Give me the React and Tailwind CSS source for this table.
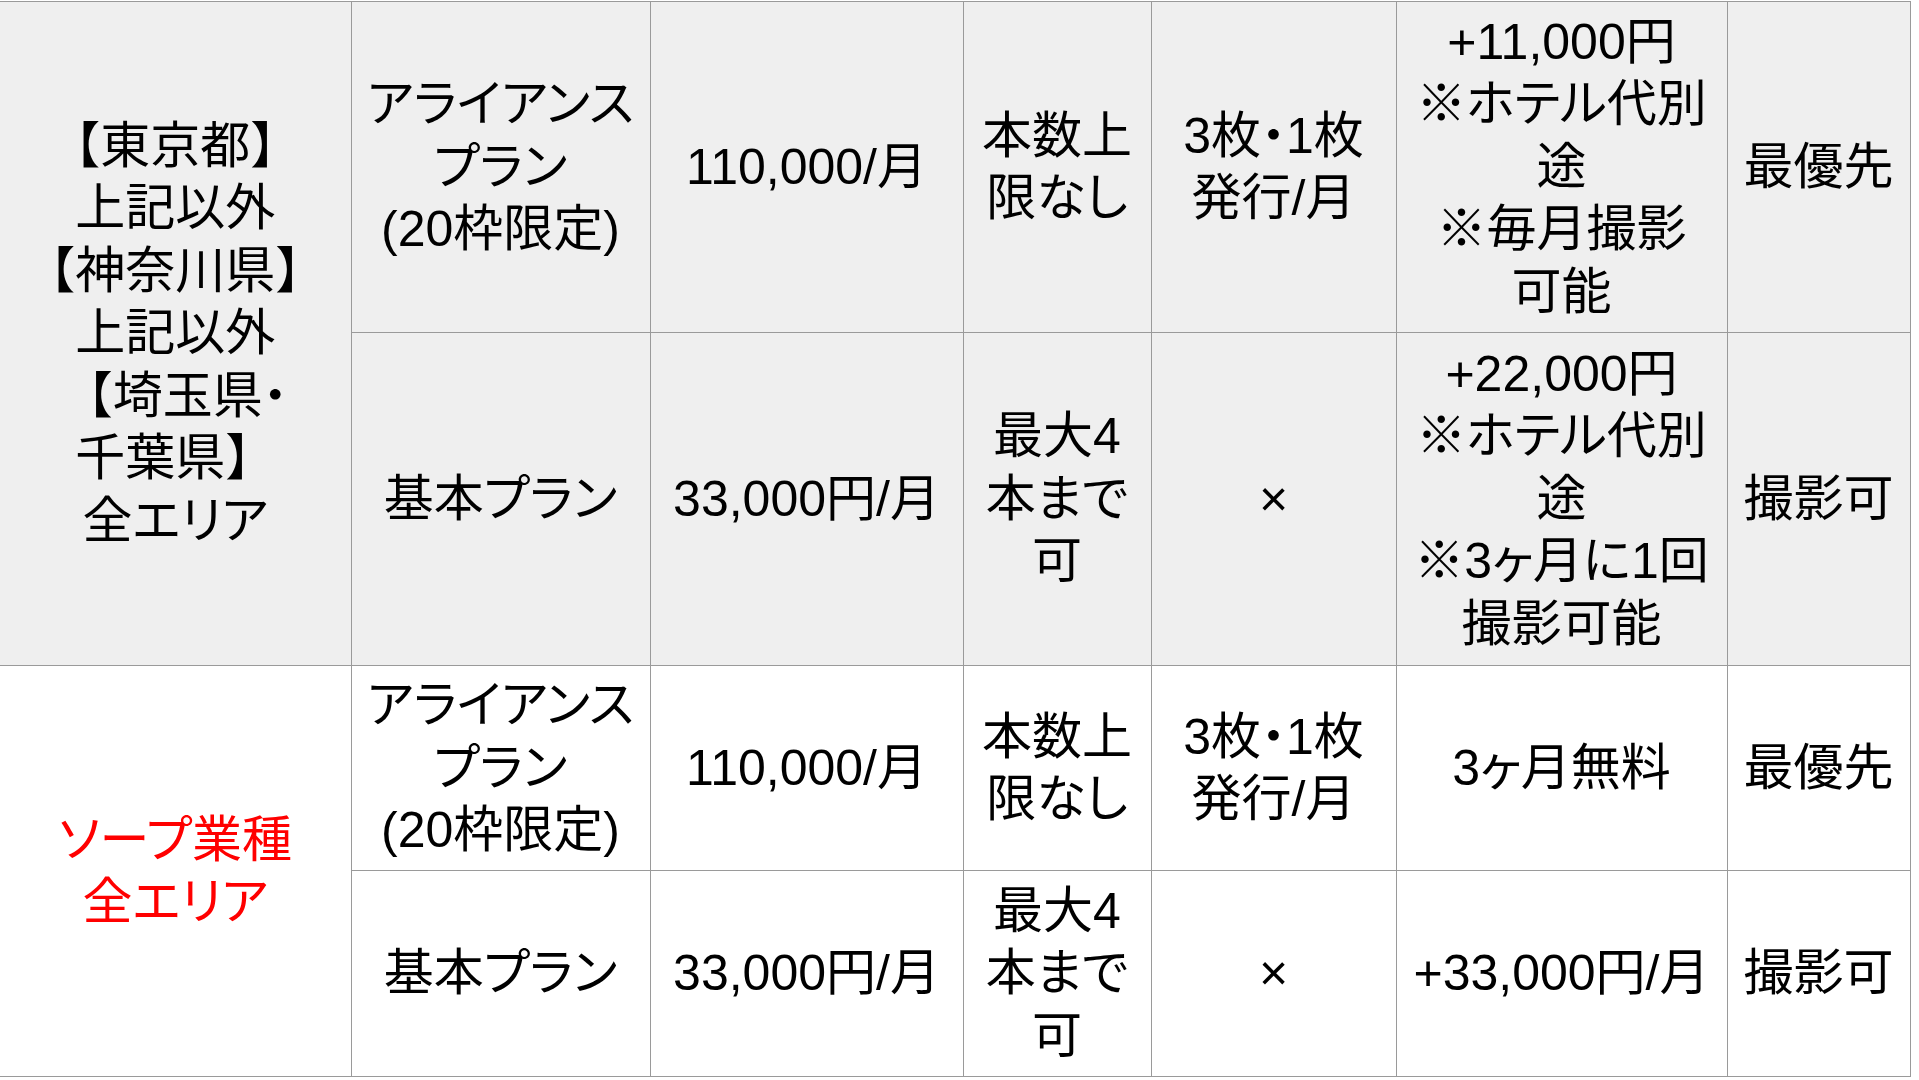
import React from 'react'

const groups = [
  {
    bg: 'bg-[#efefef]',
    area: ['【東京都】', '上記以外', '【神奈川県】', '上記以外', '【埼玉県・', '千葉県】', '全エリア'],
    red: false,
    rows: [
      {
        h: 'h-[331px]',
        cells: [
          ['アライアンス', 'プラン', '(20枠限定)'],
          ['110,000/月'],
          ['本数上', '限なし'],
          ['3枚・1枚', '発行/月'],
          ['+11,000円', '※ホテル代別', '途', '※毎月撮影', '可能'],
          ['最優先'],
        ],
      },
      {
        h: 'h-[333px]',
        cells: [
          ['基本プラン'],
          ['33,000円/月'],
          ['最大4', '本まで', '可'],
          ['×'],
          ['+22,000円', '※ホテル代別', '途', '※3ヶ月に1回', '撮影可能'],
          ['撮影可'],
        ],
      },
    ],
  },
  {
    bg: 'bg-white',
    area: ['ソープ業種', '全エリア'],
    red: true,
    rows: [
      {
        h: 'h-[205px]',
        cells: [
          ['アライアンス', 'プラン', '(20枠限定)'],
          ['110,000/月'],
          ['本数上', '限なし'],
          ['3枚・1枚', '発行/月'],
          ['3ヶ月無料'],
          ['最優先'],
        ],
      },
      {
        h: 'h-[206px]',
        cells: [
          ['基本プラン'],
          ['33,000円/月'],
          ['最大4', '本まで', '可'],
          ['×'],
          ['+33,000円/月'],
          ['撮影可'],
        ],
      },
    ],
  },
]

// brackets keep their full width, kana are set proportional
function Line({ text }) {
  return text.split(/([【】])/).map((part, i) =>
    part === '【' || part === '】' ? (
      <span key={i} className="[font-feature-settings:normal]">{part}</span>
    ) : (
      part
    )
  )
}

function Lines({ lines }) {
  return lines.map((l, i) => (
    <React.Fragment key={i}>
      {i > 0 && <br />}
      <Line text={l} />
    </React.Fragment>
  ))
}

const cell = 'border-[1.5px] border-[#9a9a9a] p-0 text-center align-middle whitespace-nowrap'

export default function App() {
  return (
    <div className="w-[1919px] h-[1080px] bg-white pt-[1px] overflow-hidden">
      <table
        className="table-fixed border-collapse text-[50px] leading-[62.5px] text-black [font-feature-settings:'palt']"
        style={{ fontFamily: '"Liberation Sans", "Noto Sans CJK JP", sans-serif' }}
      >
        <colgroup>
          <col className="w-[351px]" />
          <col className="w-[299px]" />
          <col className="w-[313px]" />
          <col className="w-[188px]" />
          <col className="w-[245px]" />
          <col className="w-[331px]" />
          <col className="w-[183px]" />
        </colgroup>
        <tbody>
          {groups.map((g, gi) =>
            g.rows.map((r, ri) => (
              <tr key={gi + '-' + ri} className={r.h + ' ' + g.bg}>
                {ri === 0 && (
                  <td
                    rowSpan={g.rows.length}
                    className={cell + ' border-l-0 ' + (g.red ? 'text-[#ff0000]' : '')}
                  >
                    <Lines lines={g.area} />
                  </td>
                )}
                {r.cells.map((c, ci) => (
                  <td key={ci} className={cell}>
                    <Lines lines={c} />
                  </td>
                ))}
              </tr>
            ))
          )}
        </tbody>
      </table>
    </div>
  )
}
